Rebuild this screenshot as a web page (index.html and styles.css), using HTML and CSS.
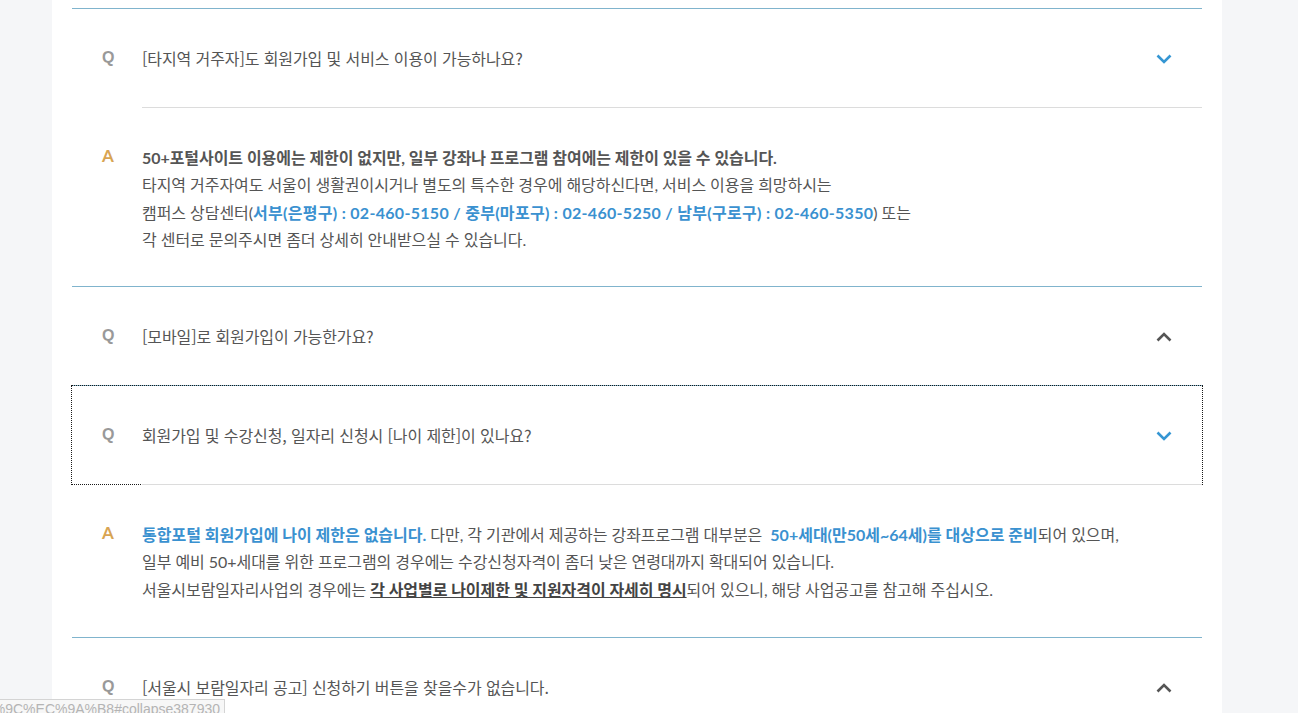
FILE: index.html
```html
<!DOCTYPE html>
<html lang="ko">
<head>
<meta charset="utf-8">
<title>FAQ</title>
<link rel="stylesheet" href="styles.css">
</head>
<body>
<div class="page">
  <div class="faq">
    <div class="item">
      <div class="q">
        <span class="q-mark">Q</span>
        <span class="q-text">[타지역 거주자]도 회원가입 및 서비스 이용이 가능하나요?</span>
        <svg class="chev down" viewBox="0 0 16 10" width="16" height="10"><path d="M1.5 1.5 L8 8 L14.5 1.5" fill="none" stroke="currentColor" stroke-width="2.6"/></svg>
      </div>
      <div class="a">
        <span class="a-mark">A</span>
        <div class="a-text">
          <p><b>50+포털사이트 이용에는 제한이 없지만, 일부 강좌나 프로그램 참여에는 제한이 있을 수 있습니다.</b></p>
          <p>타지역 거주자여도 서울이 생활권이시거나 별도의 특수한 경우에 해당하신다면, 서비스 이용을 희망하시는</p>
          <p>캠퍼스 상담센터(<b class="blue phone">서부(은평구) : 02-460-5150 / 중부(마포구) : 02-460-5250 / 남부(구로구) : 02-460-5350</b>) 또는</p>
          <p>각 센터로 문의주시면 좀더 상세히 안내받으실 수 있습니다.</p>
        </div>
      </div>
    </div>
    <div class="item">
      <div class="q">
        <span class="q-mark">Q</span>
        <span class="q-text">[모바일]로 회원가입이 가능한가요?</span>
        <svg class="chev up" viewBox="0 0 16 10" width="16" height="10"><path d="M1.5 8.5 L8 2 L14.5 8.5" fill="none" stroke="currentColor" stroke-width="2.6"/></svg>
      </div>
    </div>
    <div class="item">
      <div class="q focused">
        <span class="q-mark">Q</span>
        <span class="q-text">회원가입 및 수강신청, 일자리 신청시 [나이 제한]이 있나요?</span>
        <svg class="chev down" viewBox="0 0 16 10" width="16" height="10"><path d="M1.5 1.5 L8 8 L14.5 1.5" fill="none" stroke="currentColor" stroke-width="2.6"/></svg>
      </div>
      <div class="a a-3line">
        <span class="a-mark">A</span>
        <div class="a-text">
          <p><b class="blue">통합포털 회원가입에 나이 제한은 없습니다.</b> 다만, 각 기관에서 제공하는 강좌프로그램 대부분은 &nbsp;<b class="blue">50+세대(만50세~64세)를 대상으로 준비</b>되어 있으며,</p>
          <p>일부 예비 50+세대를 위한 프로그램의 경우에는 수강신청자격이 좀더 낮은 연령대까지 확대되어 있습니다.</p>
          <p>서울시보람일자리사업의 경우에는 <b class="ul">각 사업별로 나이제한 및 지원자격이 자세히 명시</b>되어 있으니, 해당 사업공고를 참고해 주십시오.</p>
        </div>
      </div>
    </div>
    <div class="item">
      <div class="q">
        <span class="q-mark">Q</span>
        <span class="q-text">[서울시 보람일자리 공고] 신청하기 버튼을 찾을수가 없습니다.</span>
        <svg class="chev up" viewBox="0 0 16 10" width="16" height="10"><path d="M1.5 8.5 L8 2 L14.5 8.5" fill="none" stroke="currentColor" stroke-width="2.6"/></svg>
      </div>
    </div>
  </div>
</div>
<div class="statusbar"><span>%EC%84%9C%EC%9A%B8#collapse387930</span></div>
</body>
</html>
```

FILE: styles.css
```css
html, body {
  margin: 0;
  padding: 0;
  background: #f5f6f8;
  height: 100%;
  overflow: hidden;
}

body {
  font-family: Lato, "Noto Sans CJK KR", sans-serif;
  color: #555;
  font-size: 16px;
}

.page {
  margin-left: 52px;
  width: 1170px;
  min-height: 100%;
  background: #fff;
  padding: 8px 20px 0;
  box-sizing: border-box;
}

.item {
  border-top: 1px solid #80b4cd;
}

.q {
  height: 98px;
  display: flex;
  align-items: center;
  position: relative;
}

.q.focused {
  outline: 1px dotted #1a1a1a;
  outline-offset: 0;
}

.q-mark {
  width: 70px;
  padding-left: 30px;
  box-sizing: border-box;
  font-family: "Liberation Sans", Arial, sans-serif;
  font-weight: bold;
  font-size: 16px;
  color: #999;
  flex: none;
}

.q-text {
  flex: 1;
  font-family: "Noto Sans CJK KR", sans-serif;
  color: #555;
  font-size: 16px;
  letter-spacing: -0.1px;
}

.chev {
  flex: none;
  margin-right: 30px;
  margin-top: 2px;
}
.chev.down { color: #3596d3; }
.chev.up { color: #555; }

.a {
  position: relative;
  z-index: 1;
  margin-left: 70px;
  border-top: 1px solid #dcdcdc;
  padding: 36px 0 33px;
  display: flex;
}

.a.a-3line {
  padding-bottom: 34px;
}

.a-mark {
  position: absolute;
  left: -40px;
  top: 37px;
  font-family: Lato, sans-serif;
  font-weight: bold;
  font-size: 17px;
  color: #d8a452;
}

.a-text p {
  margin: 0;
  height: 27.3px;
  line-height: 27.3px;
  font-size: 16px;
  letter-spacing: -0.05px;
  white-space: nowrap;
}

.a-text b {
  font-weight: bold;
}

.blue {
  color: #3a91d0;
  letter-spacing: 0;
}

.blue.phone {
  letter-spacing: 0.3px;
}

.ul {
  color: #444;
  text-decoration: underline;
}

.statusbar {
  position: fixed;
  left: 0;
  bottom: 0;
  width: 220px;
  height: 13px;
  overflow: hidden;
  display: flex;
  justify-content: flex-end;
  background: #f7f7f7;
  border-top: 1px solid #d4d4d4;
  border-right: 1px solid #d4d4d4;
  font-family: "Liberation Sans", Arial, sans-serif;
  font-size: 14px;
  line-height: 18px;
  color: #b4b4b4;
  white-space: nowrap;
  padding-right: 4px;
}
```
